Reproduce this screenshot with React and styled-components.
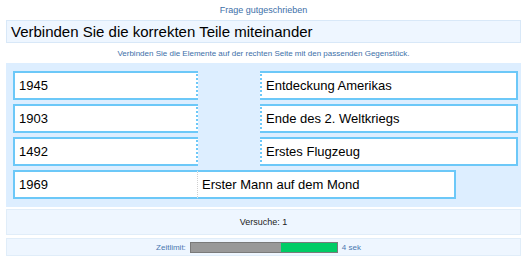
import React from "react";
import styled, { createGlobalStyle } from "styled-components";

const GlobalStyle = createGlobalStyle`
  body {
    margin: 0;
    background: #fff;
    font-family: "Liberation Sans", Arial, sans-serif;
  }
`;

const pairs = [
  { left: "1945", right: "Entdeckung Amerikas" },
  { left: "1903", right: "Ende des 2. Weltkriegs" },
  { left: "1492", right: "Erstes Flugzeug" },
  { left: "1969", right: "Erster Mann auf dem Mond", matched: true },
];

const App = () => {
  return (
    <Page>
      <GlobalStyle />
      <Credit>Frage gutgeschrieben</Credit>
      <Title>Verbinden Sie die korrekten Teile miteinander</Title>
      <Hint>
        Verbinden Sie die Elemente auf der rechten Seite mit den passenden
        Gegenstück.
      </Hint>
      <Board>
        {pairs.map((p) => (
          <Row key={p.left} matched={p.matched}>
            <LeftItem matched={p.matched}>{p.left}</LeftItem>
            <RightItem matched={p.matched}>{p.right}</RightItem>
          </Row>
        ))}
      </Board>
      <Tries>Versuche: 1</Tries>
      <Timer>
        <TimerLabel>Zeitlimit:</TimerLabel>
        <Bar>
          <BarUsed />
          <BarLeft />
        </Bar>
        <TimerLabel>4 sek</TimerLabel>
      </Timer>
    </Page>
  );
};

const Page = styled.div`
  padding: 0 5px 0 6px;
`;

const Credit = styled.div`
  height: 20px;
  display: flex;
  align-items: center;
  justify-content: center;
  font-size: 9px;
  color: #3d6fa8;
`;

const Title = styled.div`
  height: 21px;
  display: flex;
  align-items: center;
  padding-left: 4px;
  background: #eef6ff;
  border: 1px solid #d8e8f8;
  font-size: 15px;
  color: #000;
`;

const Hint = styled.div`
  height: 20px;
  display: flex;
  align-items: center;
  justify-content: center;
  font-size: 8px;
  color: #3d6fa8;
`;

const Board = styled.div`
  background: #ddeeff;
  padding: 8px 3px 8px 7px;
  display: flex;
  flex-direction: column;
  gap: 4px;
`;

const Row = styled.div`
  display: flex;
  justify-content: ${(p) => (p.matched ? "flex-start" : "space-between")};
`;

const Item = styled.div`
  box-sizing: border-box;
  height: 29px;
  display: flex;
  align-items: center;
  padding-left: 4px;
  background: #fff;
  border: 2px solid #6cc8f8;
  font-size: 13px;
  color: #000;
`;

const LeftItem = styled(Item)`
  width: 185px;
  border-right: ${(p) =>
    p.matched ? "1px dotted #d0d0d0" : "2px dotted #6cc8f8"};
`;

const RightItem = styled(Item)`
  width: 258px;
  border-left: ${(p) => (p.matched ? "none" : "2px dotted #6cc8f8")};
`;

const Tries = styled.div`
  margin-top: 2px;
  height: 24px;
  display: flex;
  align-items: center;
  justify-content: center;
  background: #eef6ff;
  border: 1px solid #e0edf9;
  font-size: 9px;
  color: #222;
`;

const Timer = styled.div`
  margin-top: 3px;
  height: 16px;
  padding-right: 10px;
  display: flex;
  align-items: center;
  justify-content: center;
  gap: 4px;
  background: #eef6ff;
  border: 1px solid #e0edf9;
`;

const TimerLabel = styled.span`
  font-size: 8px;
  color: #4a78b0;
`;

const Bar = styled.div`
  width: 146px;
  height: 9px;
  display: flex;
  border: 1px solid #7a7a7a;
`;

const BarUsed = styled.div`
  flex: 90;
  background: #999;
`;

const BarLeft = styled.div`
  flex: 56;
  background: #00cc66;
`;

export default App;
